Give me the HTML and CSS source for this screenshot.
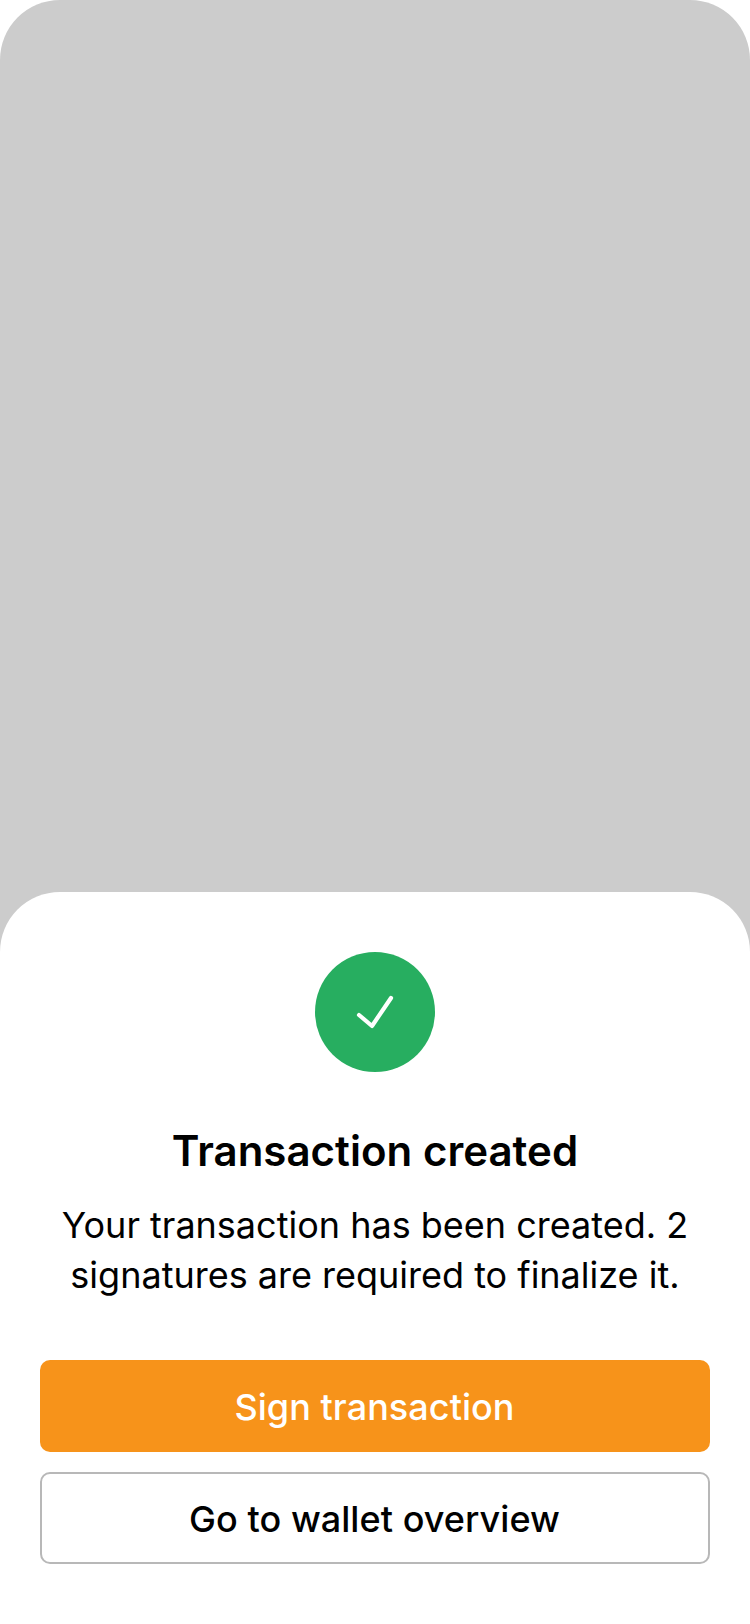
FILE: index.html
```html
<!DOCTYPE html>
<html lang="en">
<head>
<meta charset="utf-8">
<title>Transaction created</title>
<link rel="stylesheet" href="styles.css">
</head>
<body>
<main class="screen">
  <section class="sheet">
    <div class="badge">
      <svg class="check" viewBox="0 0 120 120" aria-hidden="true"><path d="M44 63L57 74L76 46"/></svg>
    </div>
    <h1 class="title">Transaction created</h1>
    <p class="message">Your transaction has been created. 2<br>signatures are required to finalize it.</p>
    <div class="actions">
      <button class="button primary">Sign transaction</button>
      <button class="button secondary">Go to wallet overview</button>
    </div>
  </section>
</main>
</body>
</html>
```
FILE: styles.css
```css
* { box-sizing: border-box; }
body { margin: 0; background: #fff; font-family: Inter, sans-serif; color: #000; }
.screen { width: 750px; height: 1624px; display: flex; flex-direction: column; justify-content: flex-end; background: #ccc; border-radius: 60px 60px 0 0; overflow: hidden; }
.sheet { height: 732px; padding: 60px 40px; background: #fff; border-radius: 60px 60px 0 0; display: flex; flex-direction: column; align-items: center; text-align: center; }
.badge { width: 120px; height: 120px; border-radius: 50%; background: #27ae60; }
.check { display: block; width: 120px; height: 120px; fill: none; stroke: #fff; stroke-width: 4.2; stroke-linecap: round; stroke-linejoin: round; }
.title { margin: 54px 0 0; font-size: 42px; line-height: 50px; font-weight: 600; letter-spacing: 0.03px; }
.message { margin: 24px 0 0; font-size: 36px; line-height: 50px; white-space: nowrap; }
.actions { width: 100%; margin-top: 60px; display: flex; flex-direction: column; gap: 20px; }
.button { height: 92px; padding: 2px 1px 0 0; border: 0; border-radius: 10px; font: 500 36px/44px Inter, sans-serif; letter-spacing: 0.05px; }
.primary { background: #f7931a; color: #fff; }
.secondary { background: #fff; color: #000; border: 2px solid #b8b8b8; }
```
